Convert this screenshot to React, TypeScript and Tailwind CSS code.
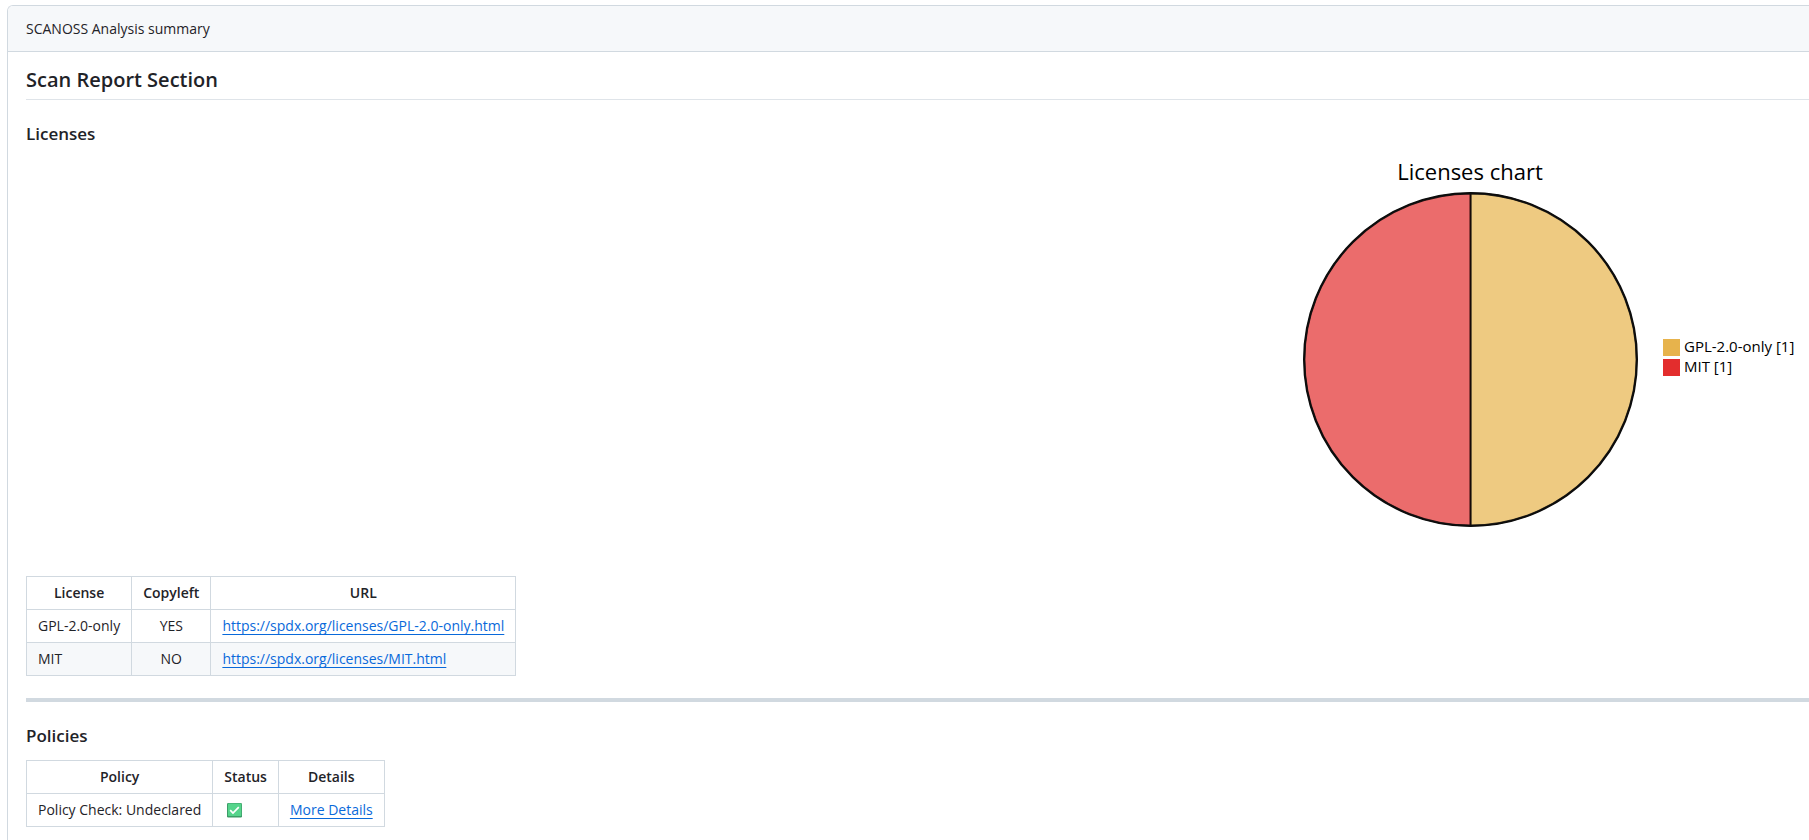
import type { ReactNode } from 'react'

const licenses = [
    { name: 'GPL-2.0-only', copyleft: 'YES', url: 'https://spdx.org/licenses/GPL-2.0-only.html' },
    { name: 'MIT', copyleft: 'NO', url: 'https://spdx.org/licenses/MIT.html' },
]

const Th = ({ children }: { children: ReactNode }) => (
    <th scope='col' className='border border-[#d1d9e0] px-[11px] py-[6px] font-semibold text-center'>{children}</th>
)

const Td = ({ children, center }: { children: ReactNode, center?: boolean }) => (
    <td className={center ? 'border border-[#d1d9e0] px-[11px] py-[6px] text-center' : 'border border-[#d1d9e0] px-[11px] py-[6px]'}>{children}</td>
)

const Link = ({ href, children }: { href: string, children: ReactNode }) => (
    <a href={href} className='text-[#0969da] underline underline-offset-[3px]'>{children}</a>
)

const CheckIcon = () => (
    <svg viewBox='0 0 15 15' className='w-[15px] h-[15px] ml-[3px]' role='img' aria-label='Passed'>
        <rect width='15' height='14.5' rx='1.2' fill='#3c9c67' />
        <rect x='1' y='0.5' width='13.3' height='12.5' rx='0.8' fill='#55d48b' />
        <path d='M3.2 7.2l2.8 2.9 5.8-5.9' fill='none' stroke='#ffffff' strokeWidth='1.7' />
    </svg>
)

const LicensesChart = () => (
    <svg viewBox='0 0 520 408' className="w-[520px] h-[408px] font-['Open_Sans','Noto_Sans',sans-serif]" role='img' aria-label='Licenses chart'>
        <text x='181' y='34' textAnchor='middle' fontSize='22' fill='#000000'>Licenses chart</text>
        <g fillOpacity='0.7' stroke='#000000' strokeOpacity='0.8' strokeWidth='1.8'>
            <path d='M181.5 47.5a166 166 0 0 1 0 332z' fill='#e7b34c' />
            <path d='M181.5 379.5a166 166 0 0 1 0-332z' fill='#e32d2d' />
        </g>
        <circle cx='181.5' cy='213.5' r='166.5' fill='none' stroke='#0c0c0c' strokeWidth='2' />
        <rect x='374' y='193' width='17' height='17' fill='#e7b34c' />
        <rect x='374' y='213' width='17' height='17' fill='#e32d2d' />
        <text x='395' y='206' fontSize='15' fill='#000000'>GPL-2.0-only [1]</text>
        <text x='395' y='226' fontSize='15' fill='#000000'>MIT [1]</text>
    </svg>
)

const App = () => {
    return (
        <main className="pt-[5px] pl-[7px] bg-white text-[14px] leading-5 text-[#1f2328] font-['Open_Sans','Noto_Sans',sans-serif]">
            <div className='border-t border-l border-[#d1d9e0] rounded-tl-[6px] overflow-hidden'>
                <header className='h-[46px] pl-[18px] flex items-center bg-[#f6f8fa] border-b border-[#d1d9e0]'>SCANOSS Analysis summary</header>
                <div className='pl-[18px] pt-[15px] pb-6'>
                    <h1 className='pb-[6px] border-b border-[#dfe4e9] text-[20px] leading-[26px] font-semibold'>Scan Report Section</h1>

                    <section>
                        <h2 className='mt-[22px] text-[17px] leading-6 font-semibold'>Licenses</h2>
                        <div className='flex justify-end'>
                            <LicensesChart />
                        </div>
                        <table className='mt-[22px] border-collapse'>
                            <thead>
                                <tr>
                                    <Th>License</Th>
                                    <Th>Copyleft</Th>
                                    <Th>URL</Th>
                                </tr>
                            </thead>
                            <tbody>
                                {licenses.map((license) => (
                                    <tr key={license.name} className='even:bg-[#f6f8fa]'>
                                        <Td>{license.name}</Td>
                                        <Td center>{license.copyleft}</Td>
                                        <Td><Link href={license.url}>{license.url}</Link></Td>
                                    </tr>
                                ))}
                            </tbody>
                        </table>
                    </section>

                    <hr className='my-[22px] h-[4px] border-0 bg-[#d1d9e0]' />

                    <section>
                        <h2 className='text-[17px] leading-6 font-semibold'>Policies</h2>
                        <table className='mt-3 border-collapse'>
                            <thead>
                                <tr>
                                    <Th>Policy</Th>
                                    <Th>Status</Th>
                                    <Th>Details</Th>
                                </tr>
                            </thead>
                            <tbody>
                                <tr>
                                    <Td>Policy Check: Undeclared</Td>
                                    <Td><CheckIcon /></Td>
                                    <Td><Link href='#details'>More Details</Link></Td>
                                </tr>
                            </tbody>
                        </table>
                    </section>
                </div>
            </div>
        </main>
    )
}

export default App
